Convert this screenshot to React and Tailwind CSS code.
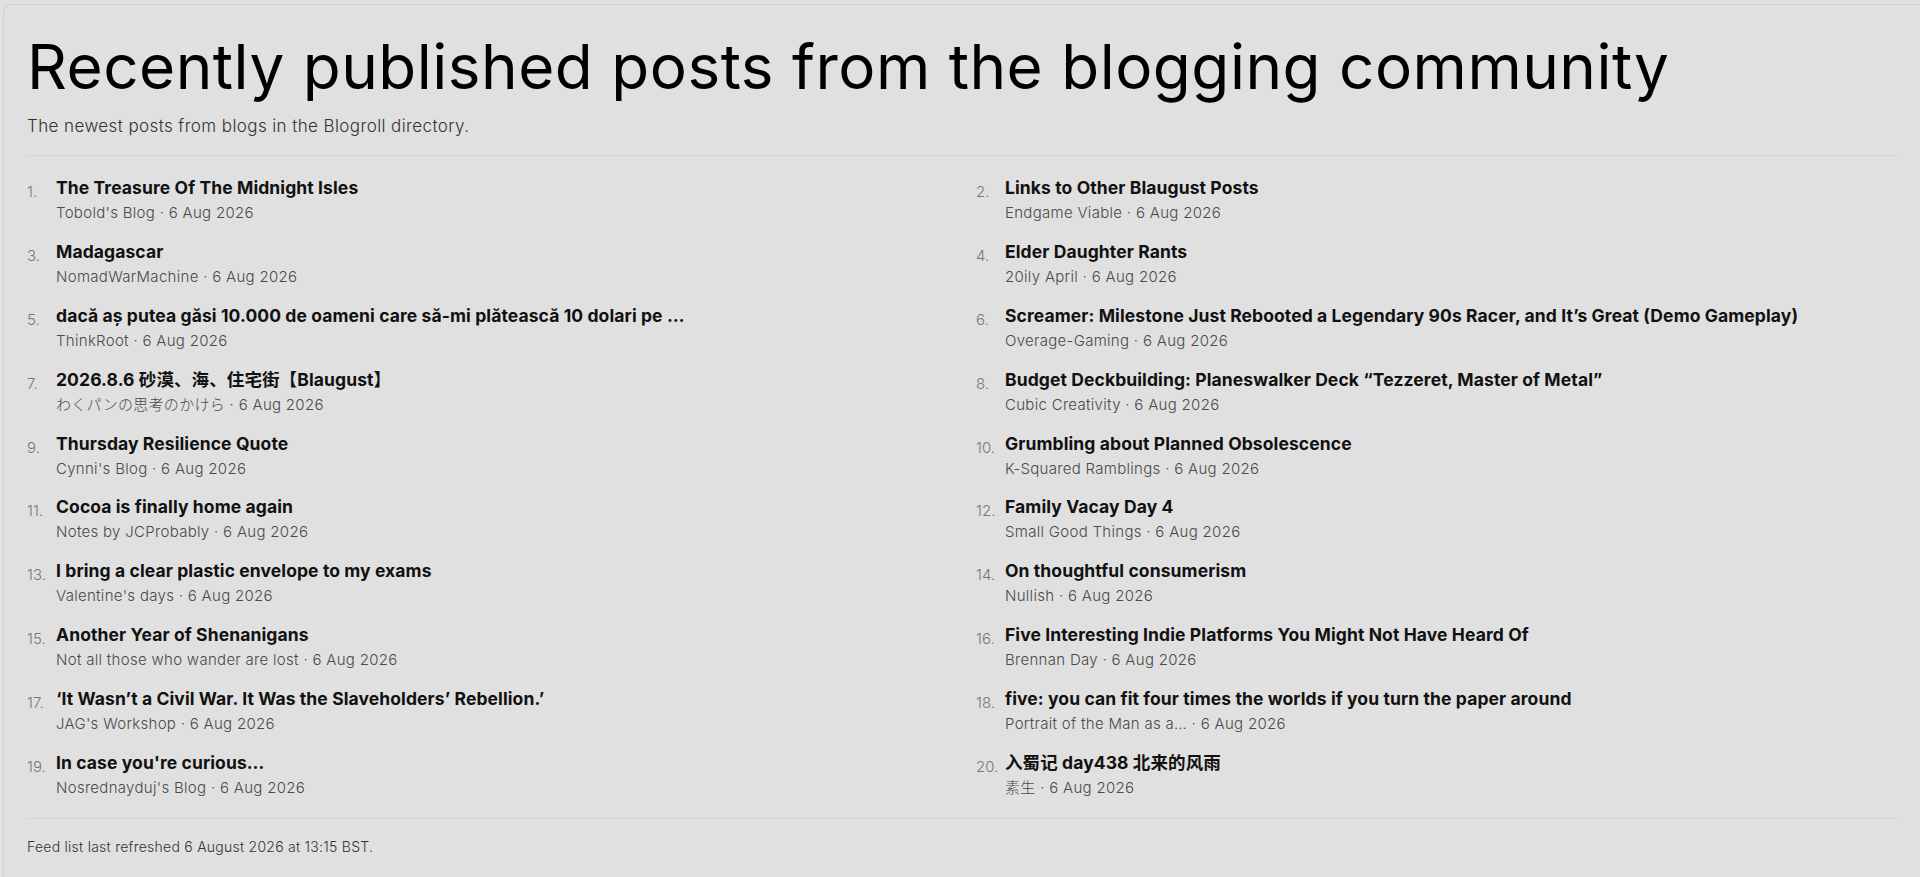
const posts = [
  { title: 'The Treasure Of The Midnight Isles', blog: "Tobold's Blog" },
  { title: 'Links to Other Blaugust Posts', blog: 'Endgame Viable' },
  { title: 'Madagascar', blog: 'NomadWarMachine' },
  { title: 'Elder Daughter Rants', blog: '20ily April' },
  { title: 'dacă aș putea găsi 10.000 de oameni care să-mi plătească 10 dolari pe …', blog: 'ThinkRoot' },
  { title: 'Screamer: Milestone Just Rebooted a Legendary 90s Racer, and It’s Great (Demo Gameplay)', blog: 'Overage-Gaming' },
  { title: '2026.8.6 砂漠、海、住宅街【Blaugust】', blog: 'わくパンの思考のかけら' },
  { title: 'Budget Deckbuilding: Planeswalker Deck “Tezzeret, Master of Metal”', blog: 'Cubic Creativity' },
  { title: 'Thursday Resilience Quote', blog: "Cynni's Blog" },
  { title: 'Grumbling about Planned Obsolescence', blog: 'K-Squared Ramblings' },
  { title: 'Cocoa is finally home again', blog: 'Notes by JCProbably' },
  { title: 'Family Vacay Day 4', blog: 'Small Good Things' },
  { title: 'I bring a clear plastic envelope to my exams', blog: "Valentine's days" },
  { title: 'On thoughtful consumerism', blog: 'Nullish' },
  { title: 'Another Year of Shenanigans', blog: 'Not all those who wander are lost' },
  { title: 'Five Interesting Indie Platforms You Might Not Have Heard Of', blog: 'Brennan Day' },
  { title: '‘It Wasn’t a Civil War. It Was the Slaveholders’ Rebellion.’', blog: "JAG's Workshop" },
  { title: 'five: you can fit four times the worlds if you turn the paper around', blog: 'Portrait of the Man as a…' },
  { title: "In case you're curious…", blog: "Nosrednayduj's Blog" },
  { title: '入蜀记 day438 北来的风雨', blog: '素生' },
];

const font = "font-['Inter','Noto_Sans_CJK_SC',sans-serif]";

export default function App() {
  return (
    <div className={`min-h-screen bg-[#e0e0e0] pl-[3px] pt-[4px] text-[#111] ${font}`}>
      {/* card with faint top/left border, runs off the right edge */}
      <main className="min-h-[873px] rounded-tl-lg border-l border-t border-[#d2d2d2] pl-[23px] pr-[20px] pt-[31px]">
        <h1 className="text-[62px] font-normal leading-none tracking-[0.5px] text-black">
          Recently published posts from the blogging community
        </h1>
        <p className="mt-[16px] text-[17px] font-light leading-[24px] tracking-[0.4px] text-[#333]">
          The newest posts from blogs in the Blogroll directory.
        </p>

        <ol className="mt-[17px] grid grid-cols-2 gap-x-[25px] gap-y-[13.9px] border-t border-[#d4d4d4] pt-[19px]">
          {posts.map((p, i) => (
            <li key={i} className="flex">
              <span className="w-[29px] shrink-0 pt-[5px] text-[15px] font-light leading-[24px] text-[#777]">
                {i + 1}.
              </span>
              <div className="min-w-0">
                <div className="text-[17.5px] font-bold leading-[26px] tracking-[0.1px] text-[#111]">
                  {p.title}
                </div>
                <div className="text-[15px] font-light leading-[24px] tracking-[0.3px] text-[#4a4a4a]">
                  {p.blog} · 6 Aug 2026
                </div>
              </div>
            </li>
          ))}
        </ol>

        <footer className="mt-[18px] border-t border-[#d4d4d4] pt-[17px] text-[14px] font-light tracking-[0.25px] text-[#333]">
          Feed list last refreshed 6 August 2026 at 13:15 BST.
        </footer>
      </main>
    </div>
  );
}
